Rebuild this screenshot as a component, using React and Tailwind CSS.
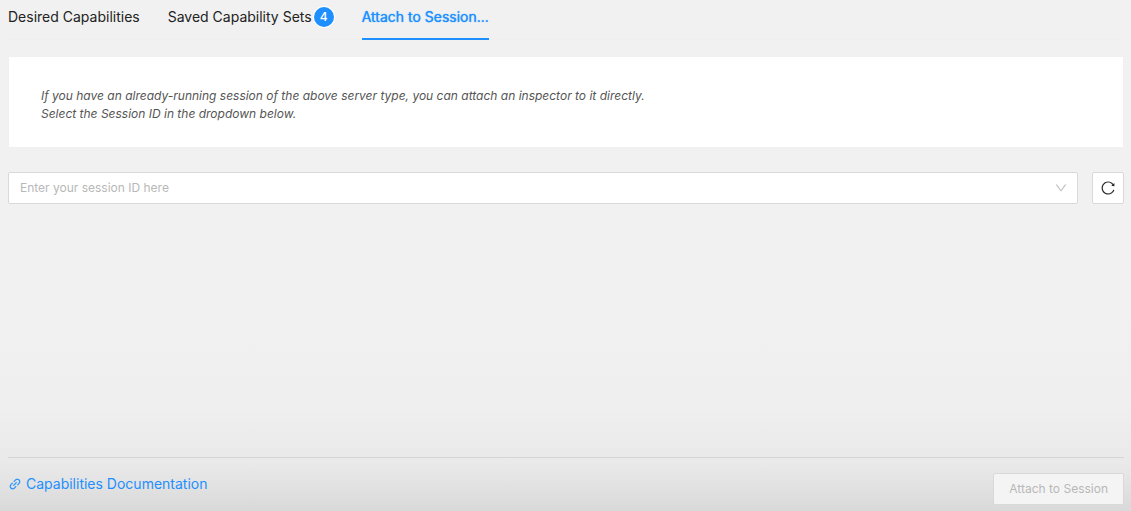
import { AiOutlineDown, AiOutlineLink, AiOutlineReload } from "react-icons/ai";

const tabs = [
  { label: "Desired Capabilities" },
  { label: "Saved Capability Sets", count: 4 },
  { label: "Attach to Session...", active: true },
];

function Tab({ label, count, active }) {
  return (
    <button
      type="button"
      role="tab"
      aria-selected={Boolean(active)}
      className={
        active
          ? "flex h-10 items-start border-b-2 border-[#1e8fff] pt-[7px] text-sm/5 whitespace-nowrap text-[#1e8fff] [text-shadow:0_0_1px_currentColor]"
          : "flex h-10 items-start gap-0.5 border-b-2 border-transparent pt-[7px] text-sm/5 whitespace-nowrap text-[#222222]"
      }
    >
      {label}
      {count !== undefined && (
        <span className="flex size-5 items-center justify-center rounded-full bg-[#1e8fff] text-xs font-medium text-white ring-1 ring-white">
          {count}
        </span>
      )}
    </button>
  );
}

export default function App() {
  return (
    <div className="flex min-h-screen flex-col bg-[linear-gradient(#f1f1f1_60%,#efefef_80%,#e9e9e9_91%,#d9d9d9)] pr-[7px] pl-2 font-['Inter',sans-serif]">
      <div role="tablist" className="flex gap-7 shadow-[inset_0_-1px_0_#efefef]">
        {tabs.map((tab) => (
          <Tab key={tab.label} {...tab} />
        ))}
      </div>

      <main className="flex-1">
        <section className="mt-4 border border-[#f0f0f0] bg-white px-8 pt-[30px] pb-6 text-xs/[18px] text-[#555555] italic">
          <p>
            If you have an already-running session of the above server type, you can attach an inspector to it directly.
            <br />
            Select the Session ID in the dropdown below.
          </p>
        </section>

        <div className="mt-6 flex gap-3.5">
          <div className="relative flex-1">
            <select
              aria-label="Session ID"
              defaultValue=""
              className="h-8 w-full appearance-none rounded-xs border border-[#d9d9d9] bg-white px-[11px] text-xs text-[#b8b8b8]"
            >
              <option value="">Enter your session ID here</option>
            </select>
            <AiOutlineDown className="pointer-events-none absolute top-[9px] right-2.5 size-3.5 text-[#bfbfbf]" />
          </div>
          <button
            type="button"
            aria-label="Reload sessions"
            className="flex size-8 items-center justify-center rounded-xs border border-[#d9d9d9] bg-white text-[#262626]"
          >
            <AiOutlineReload className="size-4" />
          </button>
        </div>
      </main>

      <footer className="flex items-start justify-between border-t border-[#d5d5d5] pt-[15px] pb-1.5">
        <a href="#capabilities" className="flex items-center gap-1 text-sm/[22px] text-[#1e8fff]">
          <AiOutlineLink className="size-3.5" strokeWidth={12} />
          Capabilities Documentation
        </a>
        <button
          type="button"
          disabled
          className="h-8 rounded-xs border border-[#d9d9d9] bg-[#f4f4f4] px-[15px] text-xs text-[#b8b8b8]"
        >
          Attach to Session
        </button>
      </footer>
    </div>
  );
}
